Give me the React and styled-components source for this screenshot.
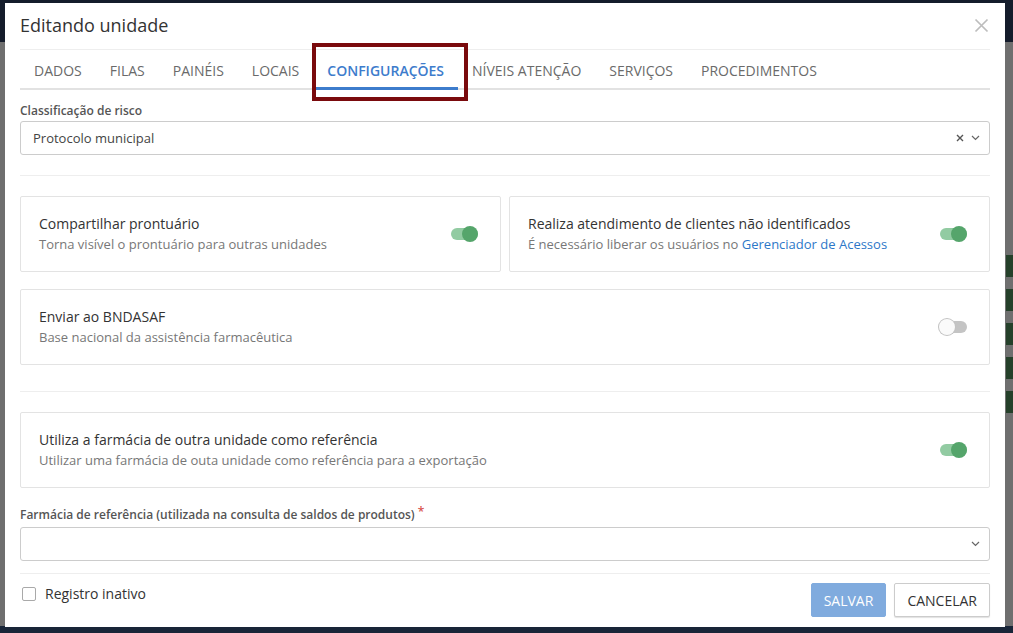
import React from "react";
import styled, { createGlobalStyle } from "styled-components";

const GlobalStyle = createGlobalStyle`
  html, body { margin: 0; padding: 0; }
  body {
    font-family: "Open Sans", "Noto Sans", "Liberation Sans", sans-serif;
    width: 1013px;
    height: 633px;
    overflow: hidden;
  }
  * { box-sizing: border-box; }
`;

const Backdrop = styled.div`
  position: relative;
  width: 1013px;
  height: 633px;
  display: flex;
  flex-direction: column;
  background: #6f6f6f;
`;

const PageTop = styled.div`
  height: 42px;
  background: #141c2b;
`;

const PageBody = styled.div`
  flex: 1;
  display: flex;
  flex-direction: column;
  justify-content: center;
  gap: 12px;
  padding-left: 1006px;
`;

const GreenBar = styled.div`
  height: 22px;
  background: #25402a;
`;

const PageBottom = styled.div`
  height: 7px;
  background: #182538;
`;

const Modal = styled.div`
  position: absolute;
  top: 3px;
  left: 5px;
  width: 1000px;
  height: 624px;
  background: #fff;
  padding: 0 15px;
  display: flex;
  flex-direction: column;
`;

const Header = styled.div`
  height: 47px;
  display: flex;
  align-items: center;
  justify-content: space-between;
  border-bottom: 1px solid #eeeeee;
  padding-bottom: 2px;
`;

const Title = styled.h4`
  margin: 0;
  font-size: 18px;
  font-weight: 400;
  color: #333;
`;

const Close = styled.button`
  border: none;
  background: none;
  padding: 0;
  margin-right: 1px;
  display: flex;
  cursor: pointer;
`;

const TabBar = styled.div`
  display: flex;
  height: 40px;
  border-bottom: 2px solid #e2e2e2;
`;

const Tab = styled.div`
  position: relative;
  padding: 4px 14px 0;
  display: flex;
  align-items: center;
  font-size: 14px;
  font-weight: ${(p) => (p.$active ? 600 : 400)};
  color: ${(p) => (p.$active ? "#3d7ccc" : "#6a6a6a")};
  margin-bottom: -2px;
  border-bottom: 3px solid ${(p) => (p.$active ? "#3d7ccc" : "transparent")};
`;

const Highlight = styled.div`
  position: absolute;
  top: -7px;
  left: -1px;
  right: -10px;
  bottom: -14px;
  border: 4px solid #7a0a0d;
  pointer-events: none;
`;

const Label = styled.label`
  display: block;
  font-size: 12px;
  font-weight: 600;
  color: #555;
  line-height: 16px;
  margin-top: ${(p) => p.$top || 0}px;
  margin-bottom: ${(p) => p.$bottom ?? 3}px;
`;

const Required = styled.span`
  color: #d9534f;
  margin-left: 3px;
  line-height: 0;
  position: relative;
  top: -3px;
`;

const Select = styled.div`
  height: 34px;
  border: 1px solid #cccccc;
  border-radius: 3px;
  display: flex;
  align-items: center;
  padding: 0 12px;
  font-size: 13px;
  color: #444;
`;

const SelectValue = styled.span`
  flex: 1;
`;

const SelectIcons = styled.span`
  display: flex;
  align-items: center;
  gap: 7px;
  color: #666;
  margin-right: -3px;
`;

const Divider = styled.hr`
  border: none;
  border-top: 1px solid #eeeeee;
  margin: ${(p) => p.$m || "20px 0"};
`;

const CardRow = styled.div`
  display: grid;
  grid-template-columns: ${(p) => (p.$cols === 2 ? "1fr 1fr" : "1fr")};
  gap: 8px;
  margin-bottom: ${(p) => p.$mb || 0}px;
`;

const Card = styled.div`
  border: 1px solid #e3e3e3;
  border-radius: 2px;
  padding: 17px 22px 17px 18px;
  display: flex;
  align-items: center;
  justify-content: space-between;
`;

const CardText = styled.div`
  display: flex;
  flex-direction: column;
`;

const CardTitle = styled.span`
  font-size: 14px;
  line-height: 20px;
  color: #333;
`;

const CardSub = styled.span`
  font-size: 13px;
  line-height: 20px;
  color: #777;
`;

const Link = styled.a`
  color: #2d77c8;
  text-decoration: none;
`;

const Track = styled.span`
  position: relative;
  width: 27px;
  height: 12px;
  border-radius: 6px;
  background: ${(p) => (p.$on ? "#92cba2" : "#c4c4c4")};
  margin-top: -1px;
`;

const Thumb = styled.span`
  position: absolute;
  top: -2px;
  left: ${(p) => (p.$on ? "11px" : "-1px")};
  width: 16px;
  height: 16px;
  border-radius: 50%;
  background: ${(p) => (p.$on ? "#55a56b" : "#fafafa")};
  box-shadow: ${(p) => (p.$on ? "none" : "0 0 0 1px #c2c2c2")};
`;

const Footer = styled.div`
  flex: 1;
  display: flex;
  align-items: flex-start;
  justify-content: space-between;
  padding-top: 9px;
`;

const Check = styled.label`
  display: flex;
  align-items: center;
  gap: 9px;
  font-size: 14px;
  color: #333;
  margin-top: 1px;
  margin-left: 2px;
`;

const Box = styled.span`
  width: 14px;
  height: 14px;
  border: 1px solid #a9a9a9;
  border-radius: 2px;
`;

const Buttons = styled.div`
  display: flex;
  gap: 8px;
`;

const Button = styled.button`
  height: 34px;
  padding: 0 12px;
  font-family: inherit;
  font-size: 14px;
  border-radius: 2px;
  border: 1px solid ${(p) => (p.$primary ? "#80abde" : "#cccccc")};
  background: ${(p) => (p.$primary ? "#80abde" : "#fff")};
  color: ${(p) => (p.$primary ? "#fff" : "#333")};
  box-shadow: ${(p) => (p.$primary ? "none" : "0 1px 1px rgba(0,0,0,0.12)")};
`;

const Toggle = ({ on }) => (
  <Track $on={on}>
    <Thumb $on={on} />
  </Track>
);

const Chevron = () => (
  <svg width="9" height="6" viewBox="0 0 9 6" fill="none">
    <path d="M1 1l3.5 3.5L8 1" stroke="#666" strokeWidth="1.2" />
  </svg>
);

const SmallX = () => (
  <svg width="8" height="8" viewBox="0 0 8 8" fill="none">
    <path d="M1 1l6 6M7 1L1 7" stroke="#555" strokeWidth="1.4" />
  </svg>
);

const tabs = [
  "DADOS",
  "FILAS",
  "PAINÉIS",
  "LOCAIS",
  "CONFIGURAÇÕES",
  "NÍVEIS ATENÇÃO",
  "SERVIÇOS",
  "PROCEDIMENTOS",
];

export default function App() {
  return (
    <>
      <GlobalStyle />
      <Backdrop>
        <PageTop />
        <PageBody>
          <GreenBar />
          <GreenBar />
          <GreenBar />
          <GreenBar />
          <GreenBar />
        </PageBody>
        <PageBottom />
        <Modal>
          <Header>
            <Title>Editando unidade</Title>
            <Close>
              <svg width="15" height="15" viewBox="0 0 15 15" fill="none">
                <path d="M1.5 1.5l12 12M13.5 1.5l-12 12" stroke="#bdbdbd" strokeWidth="1.7" />
              </svg>
            </Close>
          </Header>
          <TabBar>
            {tabs.map((t) => (
              <Tab key={t} $active={t === "CONFIGURAÇÕES"}>
                {t}
                {t === "CONFIGURAÇÕES" && <Highlight />}
              </Tab>
            ))}
          </TabBar>

          <Label $top={13} $bottom={2}>Classificação de risco</Label>
          <Select>
            <SelectValue>Protocolo municipal</SelectValue>
            <SelectIcons>
              <SmallX />
              <Chevron />
            </SelectIcons>
          </Select>

          <Divider $m="20px 0 20px" />

          <CardRow $cols={2} $mb={17}>
            <Card>
              <CardText>
                <CardTitle>Compartilhar prontuário</CardTitle>
                <CardSub>Torna visível o prontuário para outras unidades</CardSub>
              </CardText>
              <Toggle on />
            </Card>
            <Card>
              <CardText>
                <CardTitle>Realiza atendimento de clientes não identificados</CardTitle>
                <CardSub>
                  É necessário liberar os usuários no <Link href="#">Gerenciador de Acessos</Link>
                </CardSub>
              </CardText>
              <Toggle on />
            </Card>
          </CardRow>
          <CardRow>
            <Card>
              <CardText>
                <CardTitle>Enviar ao BNDASAF</CardTitle>
                <CardSub>Base nacional da assistência farmacêutica</CardSub>
              </CardText>
              <Toggle />
            </Card>
          </CardRow>

          <Divider $m="26px 0 20px" />

          <CardRow>
            <Card>
              <CardText>
                <CardTitle>Utiliza a farmácia de outra unidade como referência</CardTitle>
                <CardSub>Utilizar uma farmácia de outa unidade como referência para a exportação</CardSub>
              </CardText>
              <Toggle on />
            </Card>
          </CardRow>

          <Label $top={19} $bottom={4}>
            Farmácia de referência (utilizada na consulta de saldos de produtos)
            <Required>*</Required>
          </Label>
          <Select>
            <SelectValue />
            <SelectIcons>
              <Chevron />
            </SelectIcons>
          </Select>

          <Divider $m="12px 0 0" />

          <Footer>
            <Check>
              <Box />
              Registro inativo
            </Check>
            <Buttons>
              <Button $primary>SALVAR</Button>
              <Button>CANCELAR</Button>
            </Buttons>
          </Footer>
        </Modal>
      </Backdrop>
    </>
  );
}
